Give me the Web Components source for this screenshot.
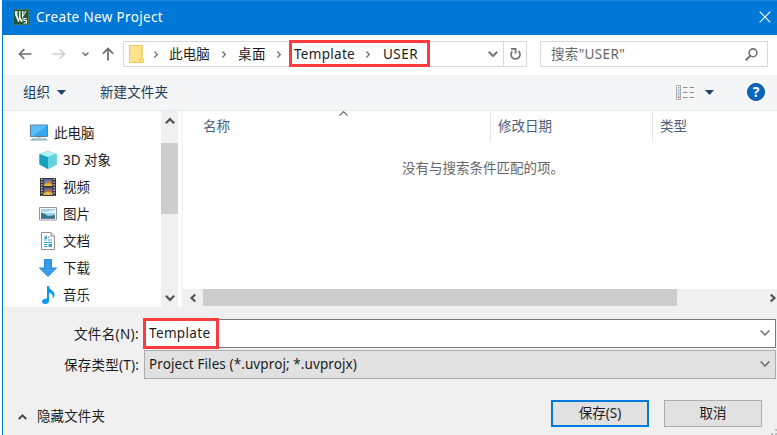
<!DOCTYPE html>
<html lang="zh-CN">
<head>
<meta charset="utf-8">
<title>Create New Project</title>
<style>
html,body{margin:0;width:777px;height:435px;overflow:hidden;background:#fff}
body{font:13.5px/20px "Noto Sans","Noto Sans CJK SC",sans-serif;color:#1c1c1c}
</style>
</head>
<body>
<save-dialog></save-dialog>
<script>
const define = (name, css, html, setup) => {
  const t = document.createElement('template');
  t.innerHTML = '<style>*{box-sizing:border-box}:host{box-sizing:border-box}svg{display:block;overflow:visible}' + css + '</style>' + html;
  customElements.define(name, class extends HTMLElement {
    connectedCallback() {
      if (this.shadowRoot) return;
      this.attachShadow({mode: 'open'}).append(t.content.cloneNode(true));
      if (setup) setup(this, this.shadowRoot);
    }
  });
};

/* Single line of text; "fit" spreads the letters over a given width. */
define('ui-text', ':host{display:block;white-space:pre;flex:none}span{display:inline-block}', '<span><slot></slot></span>', (el, root) => {
  const w = +el.getAttribute('fit');
  if (!w) return;
  const s = root.querySelector('span');
  const n = root.querySelector('slot').assignedNodes({flatten: true}).reduce((k, x) => k + x.textContent.length, 0);
  if (n) s.style.letterSpacing = (w - s.getBoundingClientRect().width) / n + 'px';
});

const icons = {
  app: [16,16,'<path fill="#1d5436" d="M0 0h16v16H0z"/><path d="M.5.500h15v15H.5z" fill="none" stroke="#4b7358"/><path d="M2 2h2.500v4L6 10.500V2h1.500v6L9 11V2h1.500v4L12 2h1.500L9.500 9v4H8L6.500 10.500 6 13H5L2 6z" fill="#dfeae2"/><path d="M13.800 9.500H11v2h2.500v2.500h-3" fill="none" stroke="#fff" stroke-width="1.100"/>'],
  back: [14,12,'<path d="M13.500 6H1.500M6.300 1.200 1.500 6l4.800 4.800" fill="none" stroke="#707070" stroke-width="1.700"/>'],
  forward: [14,12,'<path d="M.5 6h12M7.700 1.200 12.500 6l-4.800 4.800" fill="none" stroke="#cfcfcf" stroke-width="1.500"/>'],
  up: [12,14,'<path d="M6 13.500V1.800M.9 6.600 6 1.500l5.100 5.100" fill="none" stroke="#707070" stroke-width="1.800"/>'],
  recent: [7,4,'<path d="M.5.500 3.500 3.300 6.500.500" fill="none" stroke="#777" stroke-width="1.600"/>'],
  crumb: [4,7,'<path d="M.4.500 3.300 3.500.4 6.500" fill="none" stroke="#777" stroke-width="1.400"/>'],
  folder: [15,18,'<path d="M.5.500h12.500v12l1.500 1v4H.5z" fill="#ffe48f" stroke="#f0ca5d"/><path d="M10.500 17.500v-3l2.500-3V.500" fill="none" stroke="#efc858"/><path d="M11 14.500 13 12l1.500 1.500v4H11z" fill="#fadb75"/>'],
  down: [10,6,'<path d="M.7.700 5 5 9.300.700" fill="none" stroke="#777" stroke-width="2"/>'],
  refresh: [11,12,'<path d="M8.300 2.900A4.500 4.500 0 1 1 2.300 3.300" fill="none" stroke="#707070" stroke-width="1.700"/><path d="M1 .9h4.600v4.500" fill="none" stroke="#707070" stroke-width="1.700"/>'],
  search: [13,13,'<circle cx="8" cy="4.800" r="3.900" fill="none" stroke="#707070" stroke-width="1.600"/><path d="M5.300 7.800.6 12.400" stroke="#707070" stroke-width="2"/>'],
  close: [12,12,'<path d="m.7.700 10.600 10.600M11.300.700.7 11.300" stroke="#fff" stroke-width="1.200"/>'],
  tri: [9,5,'<path d="M0 0h9L4.500 5z" fill="#1e3f66"/>'],
  view: [18,15,'<path d="M.5.500h4v14h-4zM.5 5.200h4M.5 9.800h4" fill="#fff" stroke="#aaa"/><path d="M7 2.500h4.500M13.500 2.500H18M7 7.500h4.500M13.500 7.500H18M7 12.500h4.500M13.500 12.500H18" stroke="#909090" stroke-width="1.200"/><path d="M2 2h1.500v1.500H2z" fill="#689a9a"/><path d="M2 6.500h1.500v2H2z" fill="#5aa6f5"/><path d="M2 11.500h1.500V13H2z" fill="#dc4545"/>'],
  pc: [18,17,'<path d="M.5 1h17v11.500H.5z" fill="#36a9ee" stroke="#5c8199"/><path d="M1 1.500h16L3 12H1z" fill="#72caff" opacity=".65"/><path d="M7 13h4v1.500H7z" fill="#b8ccd8"/><path d="M3 14h12l3 2.500H0z" fill="#83a8bd"/><path d="M3 14.800h12" stroke="#d1e3ee"/>'],
  cube: [18,18,'<path d="m9 0 8.500 3v10.500L9 18 .5 13.500V3z" fill="#18a9c2"/><path d="m.5 3 8.500 3v12L.5 13.500z" fill="#18a2bd"/><path d="m9 0 8.500 3L9 6 .5 3z" fill="#b6f1f4"/><path d="M9 6v12l8.500-4.500V3z" fill="#5fd3e0"/>'],
  video: [16,18,'<path d="M0 0h16v18H0z" fill="#343434"/><path d="M3.500 1h9v7h-9z" fill="#526cac"/><path d="M3.500 9.500h9V17h-9z" fill="#485aa0"/><path d="M5 3h6.500v3H5z" fill="#c97641"/><path d="M4 6.500q4-3 8.500 0v1.500H4z" fill="#dcb640"/><path d="M5 11h7v3H5z" fill="#ae6844"/><path d="M3.500 15q5-3 9 0v2h-9z" fill="#e2ba4c"/><path d="M1.800.8v16.700M14.200.8v16.700" stroke="#d8d8d8" stroke-width="1.400" stroke-dasharray="1.300 1.400"/>'],
  image: [18,14,'<path d="M.5.500h17v12.500H.5z" fill="#fff" stroke="#959595"/><path d="M2 2h14v9.500H2z" fill="#9cd4fa"/><path d="M2 5q7 0 14-2v3H2z" fill="#e6f6ff"/><path d="M2 5.500q4 .500 7 3.500l7-1v3.500H2z" fill="#3b7b75"/><path d="M2 10h14v1.500H2z" fill="#2d69a2"/>'],
  doc: [14,18,'<path d="M.5.500h9.500l3.500 3.500v13.500H.5z" fill="#fff" stroke="#949494"/><path d="M10 .5V4h3.500" fill="#ddd" stroke="#949494"/><path d="M3 5h2M7 5h2M3 8h2.500M7 8h4M3 10.500h8M3 12.500h3M3 14.500h3" stroke="#379bd9"/><path d="M3 7 6 3v4zM7.500 12h3.500v3H7.500z" fill="#409fd7"/>'],
  download: [18,18,'<path d="M5.500.500h7v8.500h5L9 17.500.500 9h5z" fill="#399bea" stroke="#2788d8"/>'],
  music: [13,18,'<path d="M5 0h2c0 4 5.500 4.500 5.500 8.500 0 2-1 3.500-2 4 1-3-.5-5-3.500-6v8.200C7 16.800 5.200 18 3.200 18 1.200 18 0 17 0 15.500c0-2 2.400-3.500 5-3z" fill="#0b98f3"/>'],
  sup: [10,6,'<path d="M.8 5.300 5 1.100l4.200 4.200" fill="none" stroke="#555" stroke-width="2.200"/>'],
  sdown: [10,6,'<path d="M.8.700 5 4.900 9.200.700" fill="none" stroke="#555" stroke-width="2.200"/>'],
  sleft: [6,8,'<path d="M5.300.500 1.500 4l3.800 3.500" fill="none" stroke="#555" stroke-width="2.200"/>'],
  sright: [6,8,'<path d="M.7.500 4.500 4 .7 7.500" fill="none" stroke="#555" stroke-width="2.200"/>'],
  sort: [9,5,'<path d="M.5 4.500 4.500.700l4 3.800" fill="none" stroke="#777" stroke-width="1.200"/>'],
  combo: [10,6,'<path d="M.6.600 5 5 9.400.600" fill="none" stroke="#666" stroke-width="1.400"/>'],
  hide: [9,6,'<path d="M.8 5 4.500 1.300 8.200 5" fill="none" stroke="#444" stroke-width="1.900"/>'],
  grip: [6,6,'<path d="M4 0h2v2H4zM4 4h2v2H4zM0 4h2v2H0z" fill="#bcbcbc"/>']
};
define('ui-icon', ':host{display:block;flex:none}', '', (el, root) => {
  const [w, h, p] = icons[el.getAttribute('name')];
  root.innerHTML += `<svg width="${w}" height="${h}" viewBox="0 0 ${w} ${h}">${p}</svg>`;
});

define('title-bar', `:host{display:flex;height:35px;align-items:center;background:#0078d7;color:#fff;border-top:1px solid #1883d8;padding:0 6px 2px 10px}
 ui-text{margin-left:7px}.x{margin-left:auto}`,
 `<ui-icon name="app"></ui-icon><ui-text fit="127"><slot></slot></ui-text><ui-icon class="x" name="close"></ui-icon>`);

define('address-bar', `:host{display:flex;position:relative;width:404px;height:26px;border:1px solid #d9d9d9;align-items:center;padding-left:5px;background:#fff}
 .c1{margin:0 11px 0 10px}.c2{margin:0 12px 0 12px}.c3{margin:0 13px 0 11px}.c4{margin:0 13px 0 11px}
 .d{margin-left:auto;margin-right:5px}.r{width:23px;height:24px;border-left:1px solid #d9d9d9;display:grid;place-items:center}
 mark-box{left:165px;top:-2px;width:141px;height:27px}`,
 `<ui-icon name="folder"></ui-icon><ui-icon class="c1" name="crumb"></ui-icon><ui-text fit="41">此电脑</ui-text>
  <ui-icon class="c2" name="crumb"></ui-icon><ui-text fit="28">桌面</ui-text><ui-icon class="c3" name="crumb"></ui-icon><ui-text fit="61">Template</ui-text>
  <ui-icon class="c4" name="crumb"></ui-icon><ui-text fit="35">USER</ui-text><ui-icon class="d" name="down"></ui-icon><div class="r"><ui-icon name="refresh"></ui-icon></div><mark-box></mark-box>`);

define('mark-box', ':host{display:block;position:absolute;border:3px solid #fa3c3e}', '');

define('search-box', `:host{display:flex;width:228px;height:26px;border:1px solid #d9d9d9;align-items:center;padding:0 9px 0 10px;color:#666;margin-left:13px}ui-icon{margin-left:auto}`,
 `<ui-text fit="74"><slot></slot></ui-text><ui-icon name="search"></ui-icon>`);

define('nav-bar', `:host{display:flex;height:40px;padding:6px 0 0 15px;background:#fff}
 .b{display:flex;height:26px;align-items:center;width:105px}.f{margin-left:20px}.r{margin-left:16px}.u{margin-left:13px}`,
 `<div class="b"><ui-icon name="back"></ui-icon><ui-icon class="f" name="forward"></ui-icon><ui-icon class="r" name="recent"></ui-icon><ui-icon class="u" name="up"></ui-icon></div>
 <address-bar></address-bar><search-box>搜索"USER"</search-box>`);

define('tool-bar', `:host{display:flex;height:36px;align-items:center;background:#f4f5f7;border-bottom:1px solid #e9e9eb;padding:0 12px 1px 20px;color:#1e3958}
 .t{margin:0 34px 0 7px}.v{margin-left:auto}.t2{margin:0 33px 0 11px}
 .h{width:18px;height:18px;border-radius:50%;background:#0866bd;border:1px solid #07549b;color:#fff;font-weight:700;font-size:14px;line-height:16px;text-align:center}`,
 `<ui-text fit="27">组织</ui-text><ui-icon class="t" name="tri"></ui-icon><ui-text fit="68">新建文件夹</ui-text>
 <ui-icon class="v" name="view"></ui-icon><ui-icon class="t2" name="tri"></ui-icon><div class="h">?</div>`);

define('tree-item', `:host{display:flex;height:27px;align-items:center;padding-left:36px}:host([root]){padding-left:27px}
 .i{width:18px;display:grid;place-items:center;margin-right:6px}`,
 `<div class="i"></div><ui-text><slot></slot></ui-text>`, (el, root) => {
  const i = document.createElement('ui-icon');
  i.setAttribute('name', el.getAttribute('icon'));
  root.querySelector('.i').append(i);
});

define('v-scroll', `:host{display:flex;flex-direction:column;align-items:center;width:17px;background:#f0f0f0}
 .a{height:32px;padding-top:7px}.t{width:17px;height:71px;background:#cdcdcd}.z{margin-top:auto;margin-bottom:6px}`,
 `<div class="a"><ui-icon name="sup"></ui-icon></div><div class="t"></div><ui-icon class="z" name="sdown"></ui-icon>`);

define('h-scroll', `:host{display:flex;align-items:center;height:18px;background:#f0f0f0;margin-top:auto;padding:0 0 1px 7px}
 .t{margin-left:7px;width:474px;height:17px;background:#cdcdcd}.z{margin-left:auto;margin-right:1px}`,
 `<ui-icon name="sleft"></ui-icon><div class="t"></div><ui-icon class="z" name="sright"></ui-icon>`);

define('folder-tree', `:host{display:flex;width:175px;background:#fff}.l{flex:1;padding-top:8px;height:196px;overflow:hidden}`,
 `<div class="l"><tree-item root icon="pc">此电脑</tree-item><tree-item icon="cube">3D 对象</tree-item><tree-item icon="video">视频</tree-item><tree-item icon="image">图片</tree-item><tree-item icon="doc">文档</tree-item><tree-item icon="download">下载</tree-item><tree-item icon="music">音乐</tree-item></div><v-scroll></v-scroll>`);

define('file-list', `:host{display:flex;flex-direction:column;flex:1;background:#fff;margin-left:3px;border-left:2px solid #f5f5f5}
 .h{display:grid;grid-template-columns:308px 162px 1fr;height:30px;line-height:31px;color:#4c607a;position:relative}
 .h ui-text{padding-left:7px;border-right:1px solid #e5e5e5}.h ui-text:first-child{padding-left:20px}.h ui-text:last-of-type{border:0}
 .s{position:absolute;left:156px;top:0}.e{margin-top:17px;padding-left:219px;color:#666}`,
 `<div class="h"><ui-text>名称</ui-text><ui-text>修改日期</ui-text><ui-text>类型</ui-text><ui-icon class="s" name="sort"></ui-icon></div>
 <ui-text class="e" fit="162">没有与搜索条件匹配的项。</ui-text><h-scroll></h-scroll>`);

define('combo-field', `:host{display:flex;align-items:center;height:29px;margin-right:1px}
 .l{width:136px;display:flex;justify-content:flex-end;margin-right:5px}
 .b{flex:1;height:29px;border:1px solid #7a7a7a;background:#fff;display:flex;align-items:center;padding:0 5px 1px 4px;position:relative}
 :host([drop]) .b{background:#e1e1e1;border-color:#adadad}:host([drop]) mark-box{display:none}
 .c{margin-left:auto}mark-box{left:-2px;top:-2px;width:76px;height:31px}`,
 `<div class="l"><slot name="label"></slot></div><div class="b"><slot></slot><ui-icon class="c" name="combo"></ui-icon><mark-box></mark-box></div>`);

define('push-button', `:host{display:grid;place-items:center;width:98px;height:27px;background:#e1e1e1;border:1px solid #adadad;padding-bottom:1px}:host([primary]){border:2px solid #0078d7}`, `<ui-text><slot></slot></ui-text>`);

define('dialog-footer', `:host{display:flex;flex-direction:column;height:128px;background:#f0f0f0;padding-top:12px;position:relative}
 combo-field+combo-field{margin-top:2px}.r{display:flex;align-items:center;margin-top:21px;padding:0 15px 0 15px}.r>ui-text{margin:5px 0 0 10px}.r>ui-icon{margin-top:6px}
 .p{margin-left:auto;margin-right:15px}.g{position:absolute;right:0;bottom:0}`,
 `<combo-field><ui-text slot="label" fit="65">文件名(N):</ui-text><ui-text fit="61.500">Template</ui-text></combo-field><combo-field drop><ui-text slot="label" fit="75">保存类型(T):</ui-text><ui-text fit="208">Project Files (*.uvproj; *.uvprojx)</ui-text></combo-field>
 <div class="r"><ui-icon name="hide"></ui-icon><ui-text fit="68">隐藏文件夹</ui-text><push-button class="p" primary>保存(S)</push-button><push-button>取消</push-button></div><ui-icon class="g" name="grip"></ui-icon>`);

define('save-dialog', `:host{display:block;width:775px;height:435px;margin-left:2px;border-left:1px solid #0078d7}.m{display:flex;height:196px}`,
 `<title-bar>Create New Project</title-bar><nav-bar></nav-bar><tool-bar></tool-bar><div class="m"><folder-tree></folder-tree><file-list></file-list></div><dialog-footer></dialog-footer>`);
</script>
</body>
</html>
